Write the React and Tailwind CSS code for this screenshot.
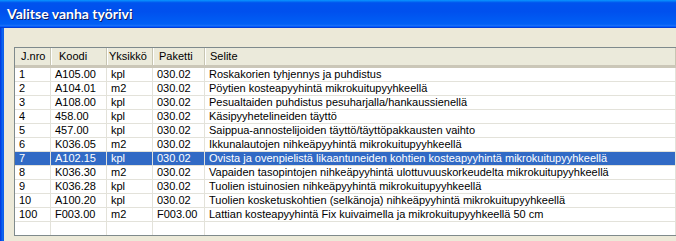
import React from "react";

const rows = [
  ["1", "A105.00", "kpl", "030.02", "Roskakorien tyhjennys ja puhdistus"],
  ["2", "A104.01", "m2", "030.02", "Pöytien kosteapyyhintä mikrokuitupyyhkeellä"],
  ["3", "A108.00", "kpl", "030.02", "Pesualtaiden puhdistus pesuharjalla/hankaussienellä"],
  ["4", "458.00", "kpl", "030.02", "Käsipyyhetelineiden täyttö"],
  ["5", "457.00", "kpl", "030.02", "Saippua-annostelijoiden täyttö/täyttöpakkausten vaihto"],
  ["6", "K036.05", "m2", "030.02", "Ikkunalautojen nihkeäpyyhintä mikrokuitupyyhkeellä"],
  ["7", "A102.15", "kpl", "030.02", "Ovista ja ovenpielistä likaantuneiden kohtien kosteapyyhintä mikrokuitupyyhkeellä"],
  ["8", "K036.30", "m2", "030.02", "Vapaiden tasopintojen nihkeäpyyhintä ulottuvuuskorkeudelta mikrokuitupyyhkeellä"],
  ["9", "K036.28", "kpl", "030.02", "Tuolien istuinosien nihkeäpyyhintä mikrokuitupyyhkeellä"],
  ["10", "A100.20", "kpl", "030.02", "Tuolien kosketuskohtien (selkänoja) nihkeäpyyhintä mikrokuitupyyhkeellä"],
  ["100", "F003.00", "m2", "F003.00", "Lattian kosteapyyhintä Fix kuivaimella ja mikrokuitupyyhkeellä 50 cm"],
  ["", "", "", "", ""],
];

const widths = ["w-[36px]", "w-[56px]", "w-[46px]", "w-[52px]", "flex-1"];
const headers = [
  ["J.nro", "pl-[6px]"],
  ["Koodi", "pl-[7px]"],
  ["Yksikkö", "pl-[1px]"],
  ["Paketti", "pl-[5px]"],
  ["Selite", "pl-[4px]"],
];

export default function App() {
  return (
    <div
      className="w-[676px] h-[241px] overflow-hidden flex flex-col bg-[#ECE9D8]"
      style={{ fontFamily: '"Liberation Sans", Arial, sans-serif' }}
    >
      <div className="h-[28px] shrink-0 flex items-center pl-[7px] bg-[linear-gradient(180deg,#0997ff_0%,#0053ee_10%,#0050ee_40%,#0060f5_86%,#1a6ff7_92%,#005bff_95%,#003dd7_97%,#003dd7_100%)]">
        <span
          className="text-white font-bold text-[14px] leading-none [text-shadow:1px_1px_0_#0a1e6a]"
          style={{ fontFamily: 'Lato, "DejaVu Sans", sans-serif' }}
        >
          Valitse vanha työrivi
        </span>
      </div>
      <div className="flex flex-1 min-h-0">
        <div className="w-[4px] shrink-0 bg-[linear-gradient(90deg,#0831d9_0%,#0058ee_40%,#1a6af0_75%,#0055e5_100%)]" />
        <div className="flex-1 pl-[10px] pt-[19px] min-w-0">
          <div className="border-l border-t border-b border-[#7f8a8c] bg-white h-[189px] overflow-hidden text-[11px] leading-[13px] text-black">
            <div className="flex h-[20px] bg-[#EBEADB] border-b-[3px] border-b-[#CBC7B8]">
              {headers.map(([h, pad], i) => (
                <div
                  key={h}
                  className={`${widths[i]} ${pad} shrink-0 flex items-center border-r border-r-[#C7C5B2] ${i > 0 ? "border-l border-l-white" : ""} whitespace-nowrap overflow-hidden`}
                >
                  {h}
                </div>
              ))}
            </div>
            {rows.map((r, ri) => {
              const sel = ri === 6;
              return (
                <div key={ri} className="flex h-[14px]">
                  {r.map((c, ci) => (
                    <div
                      key={ci}
                      className={`${widths[ci]} shrink-0 pl-[4px] border-r border-b border-[#E3E2DA] whitespace-nowrap overflow-hidden ${sel ? "bg-[#316AC5] text-white" : ""}`}
                    >
                      {c}
                    </div>
                  ))}
                </div>
              );
            })}
          </div>
        </div>
      </div>
    </div>
  );
}
